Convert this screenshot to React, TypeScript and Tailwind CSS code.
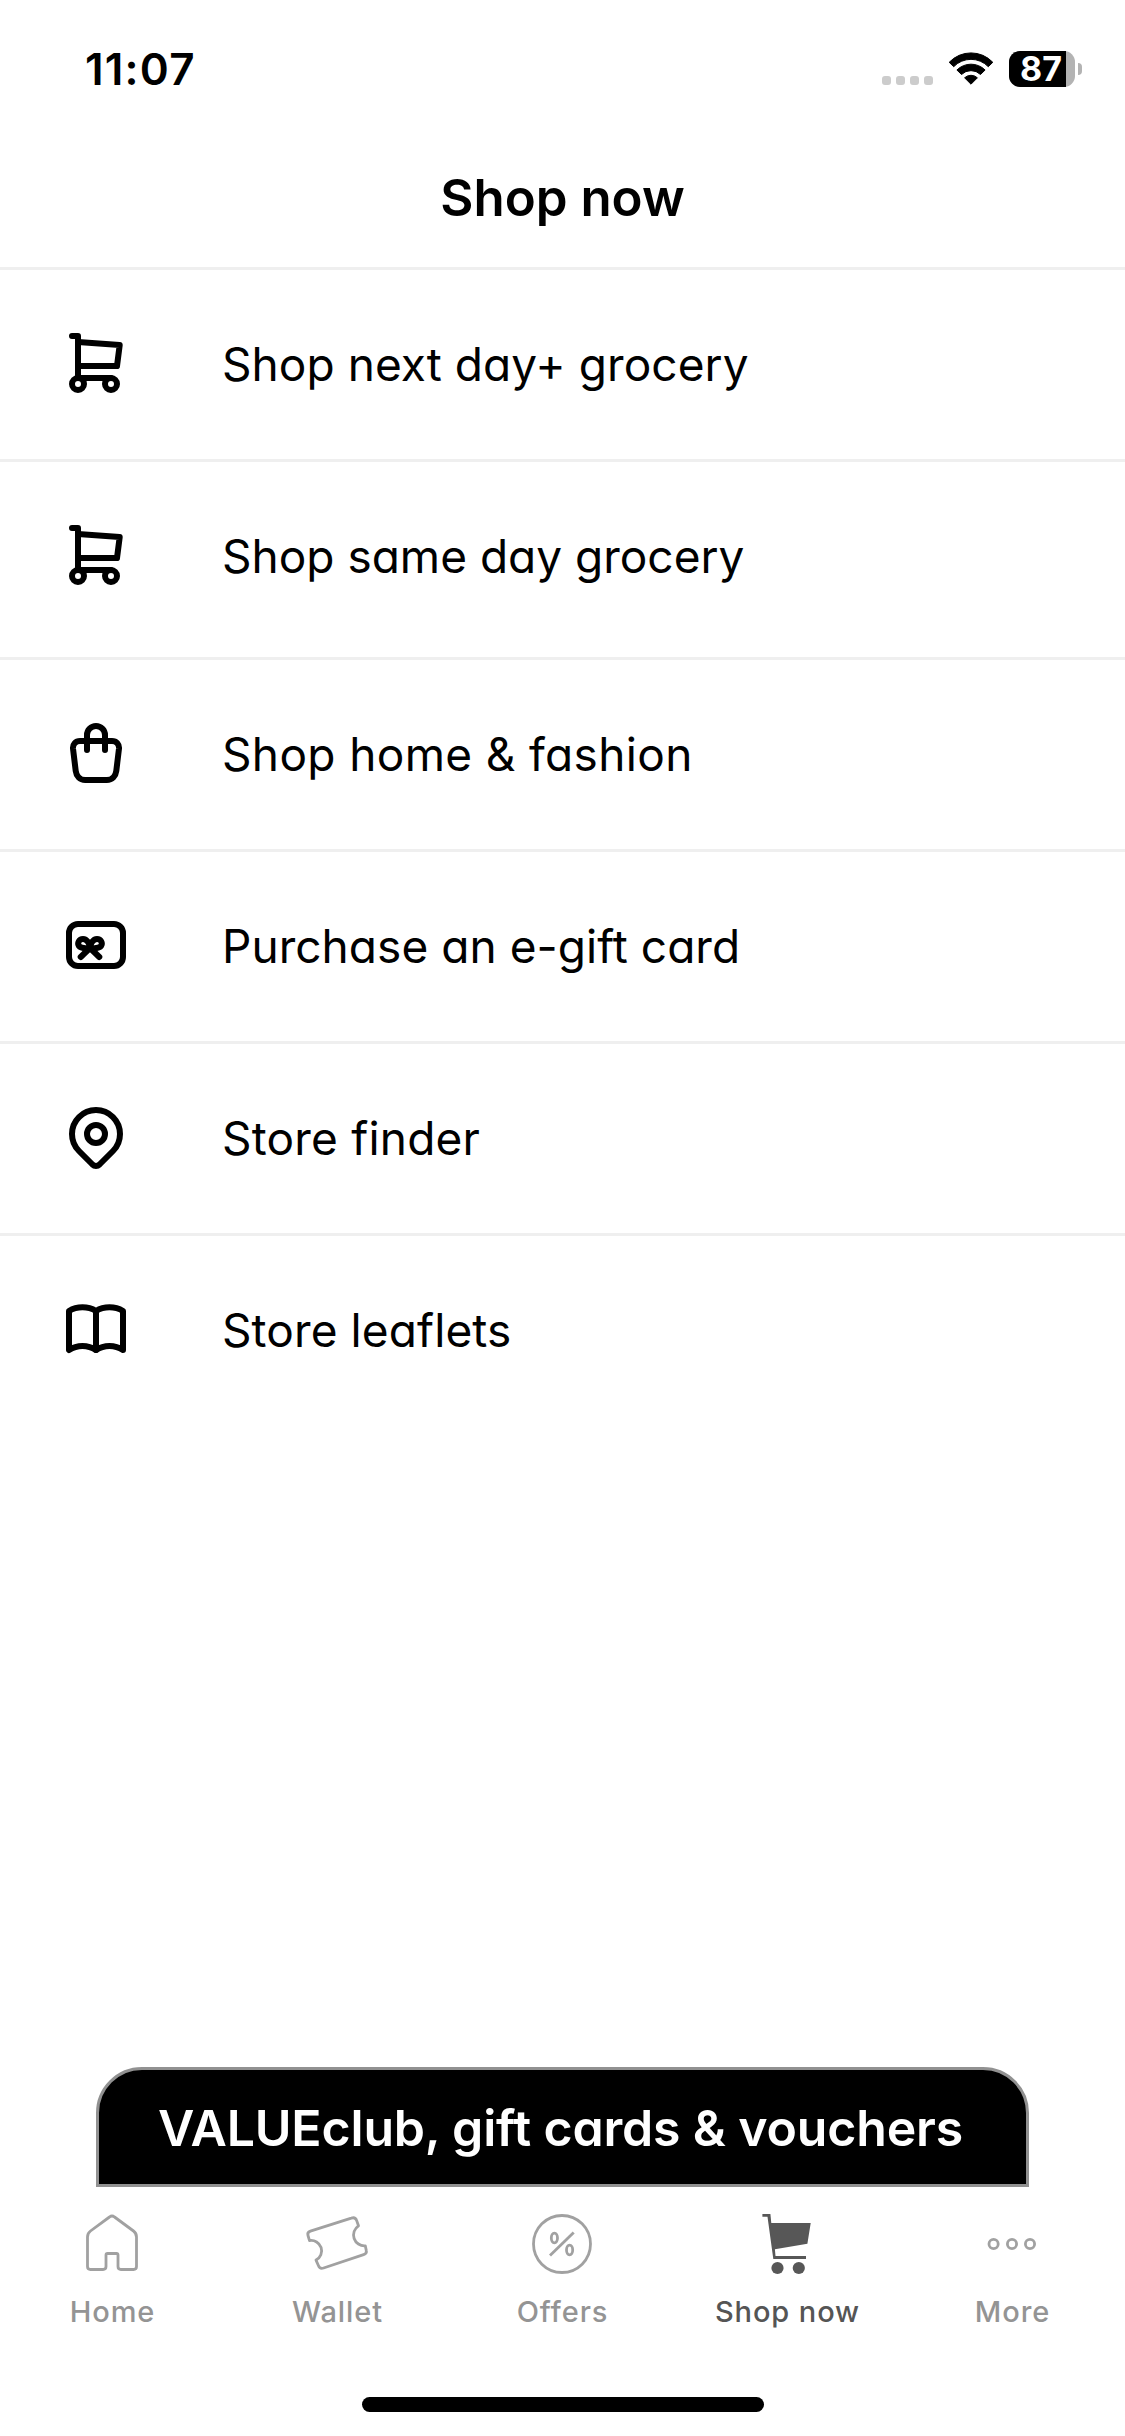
import React from 'react';

const listIconProps = {
  width: 60,
  height: 60,
  viewBox: '0 0 60 60',
  fill: 'none',
  stroke: '#000',
  strokeWidth: 6,
  strokeLinecap: 'round' as const,
  strokeLinejoin: 'round' as const,
  className: 'mt-[5px] shrink-0 overflow-visible'
};

const tabIconProps = {
  width: 66,
  height: 66,
  viewBox: '0 0 66 66',
  fill: 'none',
  stroke: '#a1a1a1',
  strokeWidth: 2.8,
  strokeLinejoin: 'round' as const,
  className: 'mr-[2px]'
};

const TrolleyIcon = () => (
  <svg {...listIconProps}>
    <path d="M6 3h6v42h33" />
    <path d="M12 9l41.7 3L51 33H12" />
    <circle cx="12" cy="51" r="6" />
    <circle cx="45" cy="51" r="6" />
  </svg>
);

const BagIcon = () => (
  <svg {...listIconProps}>
    <path d="M14 18h32c4.5 0 7.4 3.4 7 7.5l-2.7 22.3c-.7 5.5-4 9.2-9.5 9.2H19.2c-5.5 0-8.8-3.7-9.5-9.2L7 25.5C6.6 21.4 9.5 18 14 18z" />
    <path d="M21 27V12a9 9 0 0 1 18 0v15" />
  </svg>
);

const GiftCardIcon = () => (
  <svg {...listIconProps}>
    <rect x="3" y="9" width="54" height="42" rx="9" />
    <path d="M24 33c-3 0-9 1-11-2s0-7 4-7 7 5 7 9z" />
    <path d="M24 33c3 0 9 1 11-2s0-7-4-7-7 5-7 9z" />
    <path d="M24 33l-9.3 9M24 33l9.3 9" />
  </svg>
);

const PinIcon = () => (
  <svg {...listIconProps}>
    <path d="M13 44a24 24 0 1 1 34 0L33.5 57.5c-2 1.9-5 1.9-7 0z" />
    <circle cx="30" cy="27" r="9" />
  </svg>
);

const LeafletIcon = () => (
  <svg {...listIconProps}>
    <path d="M3 12C11 7 22 7 30 12C38 7 49 7 57 12V51C49 45.5 38 45.5 30 51C22 45.5 11 45.5 3 51z" />
    <path d="M30 12v39" />
  </svg>
);

const HomeIcon = () => (
  <svg {...tabIconProps}>
    <path d="M8.5 26c0-2.5 1-4.5 3-6L30.5 6c1.5-1.2 3.5-1.2 5 0l19 14c2 1.5 3 3.5 3 6v29.5q0 3-3 3H42q-3 0-3-3V44q0-1.5-1.5-1.5h-9q-1.5 0-1.5 1.5v11.5q0 3-3 3H11.5q-3 0-3-3z" />
  </svg>
);

const WalletIcon = () => (
  <svg {...tabIconProps}>
    <path d="M5.5 29.6L4 24.5q-1-3.2 2.4-4.3L47.3 7.1q4-1.4 5.3 2.3l1.9 5.4a10.9 10.9 0 0 0 6.8 20l1 4.8q.7 2.9-2.7 4L19.6 57q-3.8 1.2-5.1-2.2l-2.5-5.7A10.4 10.4 0 0 0 5.5 29.6z" />
  </svg>
);

const OffersIcon = () => (
  <svg {...tabIconProps}>
    <circle cx="33" cy="33" r="28.5" />
    <ellipse cx="25.4" cy="27" rx="3.1" ry="4.8" />
    <ellipse cx="40.6" cy="39" rx="3.1" ry="4.8" />
    <path d="M21 44.5L44.7 21.5" />
  </svg>
);

const ShopIcon = () => (
  <svg {...tabIconProps} stroke="none" fill="#575757">
    <path d="M8.4 3h8l.9 9h39.4l-3.3 20.7L20.9 38.3l.6 6.7H52v3H19.3L13.5 5.8H8.4z" />
    <circle cx="23.5" cy="57" r="6.1" />
    <circle cx="44.8" cy="57" r="6.1" />
  </svg>
);

const MoreIcon = () => (
  <svg {...tabIconProps}>
    <circle cx="14.6" cy="33" r="4.6" />
    <circle cx="33" cy="33" r="4.6" />
    <circle cx="51" cy="33" r="4.6" />
  </svg>
);

const WifiIcon = () => (
  <svg width="46" height="34" viewBox="0 0 46 34" className="ml-[15px]" stroke="#000" strokeWidth="1" strokeLinejoin="round">
    <path d="M1.2 10.3A30 30 0 0 1 44.8 10.3L40.3 14.7A24 24 0 0 0 5.7 14.7z" />
    <path d="M8.9 18A20 20 0 0 1 37.1 18L32.5 22.5A13.6 13.6 0 0 0 13.5 22.5z" />
    <path d="M16.6 25.8A9.4 9.4 0 0 1 29.4 25.8L23 32.2z" />
  </svg>
);

const listItems = [
  { title: 'Shop next day+ grocery', Icon: TrolleyIcon, style: 'h-[192px] tracking-[0.05px]' },
  { title: 'Shop same day grocery', Icon: TrolleyIcon, style: 'h-[198px]' },
  { title: 'Shop home & fashion', Icon: BagIcon, style: 'h-[192px] tracking-[0.35px]' },
  { title: 'Purchase an e-gift card', Icon: GiftCardIcon, style: 'h-[192px] tracking-[0.05px]' },
  { title: 'Store finder', Icon: PinIcon, style: 'h-[192px] tracking-[0.2px]' },
  { title: 'Store leaflets', Icon: LeafletIcon, style: 'h-[192px] tracking-[0.1px]' }
];

const tabs = [
  { label: 'Home', Icon: HomeIcon },
  { label: 'Wallet', Icon: WalletIcon },
  { label: 'Offers', Icon: OffersIcon },
  { label: 'Shop now', Icon: ShopIcon, active: true },
  { label: 'More', Icon: MoreIcon }
];

const StatusBar = () => (
  <div className="h-[107px] pt-[47px] pl-[85px] pr-[43px] flex items-start justify-between">
    <span className="text-[44px] leading-[44px] font-semibold tracking-[1.2px]">11:07</span>
    <div className="h-[44px] flex items-center">
      <div className="flex gap-[5px] mt-[23px]">
        {[0, 1, 2, 3].map((dot) => (
          <span key={dot} className="size-[9px] rounded-[3px] bg-[#cccccc]" />
        ))}
      </div>
      <WifiIcon />
      <div className="ml-[15px] w-[66px] h-[36px] rounded-[11px] bg-[#b3b3b3] flex">
        <div className="w-[57px] h-full rounded-l-[11px] bg-black pl-[11px] text-white text-[34px] leading-[36px] font-bold">87</div>
      </div>
      <span className="ml-[3px] w-[4px] h-[12px] rounded-r-full bg-[#b3b3b3]" />
    </div>
  </div>
);

const App = () => {
  return (
    <div className="w-[1125px] h-[2436px] bg-white text-black flex flex-col overflow-hidden font-['Inter',sans-serif]">
      <StatusBar />

      <header className="h-[160px] pt-[61px] text-center">
        <h1 className="text-[51px] leading-[60px] font-semibold">Shop now</h1>
      </header>

      <ul className="flex-1 [font-feature-settings:'cv11']">
        {listItems.map(({ title, Icon, style }) => (
          <li key={title} className={`border-t-[3px] border-[#efefef] pt-[58px] pl-[66px] flex items-start gap-[96px] text-[46px] leading-[72px] ${style}`}>
            <Icon />
            <span>{title}</span>
          </li>
        ))}
      </ul>

      <button className="mx-[96px] h-[120px] shrink-0 pt-[2px] pr-[4px] rounded-t-[46px] border-[3px] border-[#919191] bg-black text-white text-[50px] leading-[60px] font-semibold tracking-[-0.16px] whitespace-nowrap [font-feature-settings:'cv11']">
        VALUEclub, gift cards &amp; vouchers
      </button>

      <nav className="h-[210px] shrink-0 pt-[24px] grid grid-cols-5">
        {tabs.map(({ label, Icon, active }) => (
          <div key={label} className="flex flex-col items-center gap-[17px]">
            <Icon />
            <span className={`text-[29px] leading-[36px] font-medium tracking-[0.9px] ${active ? 'text-[#555555]' : 'text-[#949494]'}`}>{label}</span>
          </div>
        ))}
      </nav>

      <div className="mx-auto mb-[24px] w-[402px] h-[15px] shrink-0 rounded-full bg-black" />
    </div>
  );
};

export default App;
